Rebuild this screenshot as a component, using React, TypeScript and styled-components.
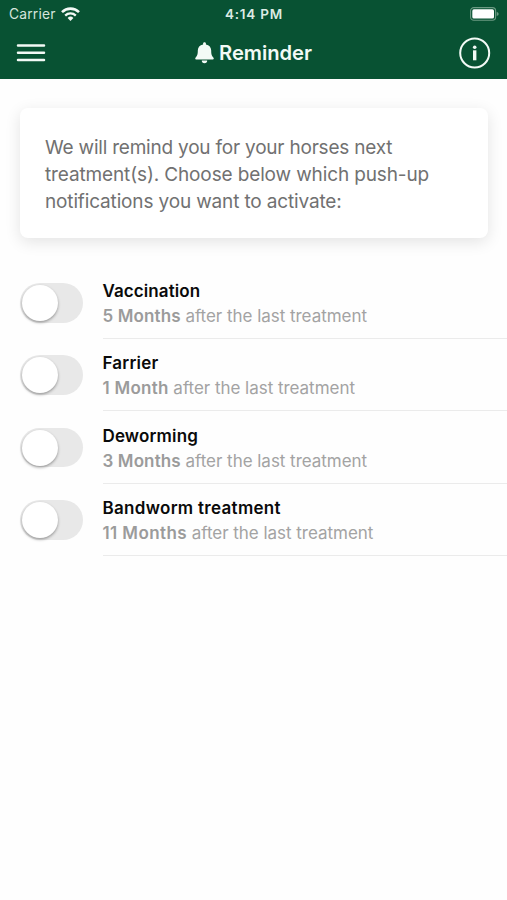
import React, { useState } from "react";
import styled, { createGlobalStyle } from "styled-components";

const GlobalStyle = createGlobalStyle`
  * { box-sizing: border-box; }
  body {
    margin: 0;
    background: #fefefe;
    font-family: Inter, "Liberation Sans", sans-serif;
  }
`;

const Screen = styled.div`
  width: 507px;
  height: 900px;
  overflow: hidden;
  background: #fefefe;
`;

const Header = styled.header`
  height: 79px;
  background: #085233;
  color: #f3faf6;
`;

const StatusBar = styled.div`
  display: grid;
  grid-template-columns: 1fr auto 1fr;
  align-items: center;
  height: 27px;
  padding: 0 8px 0 9px;
  font-size: 13.5px;
`;

const Carrier = styled.div`
  display: flex;
  align-items: center;
  gap: 5.5px;
  font-size: 13.8px;
  letter-spacing: 0.2px;
  color: #d5e5dc;
`;

const Clock = styled.div`
  font-weight: 600;
  letter-spacing: 0.8px;
  color: #dcebe3;
`;

const Battery = styled.svg`
  justify-self: end;
`;

const NavBar = styled.div`
  display: grid;
  grid-template-columns: 1fr auto 1fr;
  align-items: center;
  height: 52px;
  padding: 0 16px;
`;

const IconButton = styled.button<{ $end?: boolean }>`
  display: flex;
  justify-self: ${(p) => (p.$end ? "end" : "start")};
  padding: 0;
  border: 0;
  background: none;
  color: inherit;
`;

const Title = styled.h1`
  display: flex;
  align-items: center;
  gap: 5px;
  margin: 0;
  font-size: 20.2px;
  font-weight: 600;
  line-height: 24px;
  letter-spacing: -0.05px;
`;

const Card = styled.section`
  margin: 29px 19px 0 20px;
  height: 130px;
  padding: 26px 25px 24px;
  border-radius: 8px;
  background: #fff;
  box-shadow: 0 4px 16px rgba(0, 0, 0, 0.11);
`;

const Message = styled.p`
  margin: 0;
  font-size: 19px;
  line-height: 27px;
  color: #717171;
  white-space: nowrap;
`;

const Line = styled.span<{ $spacing: number }>`
  display: block;
  letter-spacing: ${(p) => p.$spacing}px;
`;

const List = styled.ul`
  margin: 28px 0 0;
  padding: 0 0 0 20px;
  list-style: none;
`;

const Row = styled.li`
  display: flex;
  gap: 19.5px;
  height: 72.4px;
`;

const Switch = styled.button`
  width: 63px;
  height: 39.5px;
  margin-top: 17px;
  padding: 1.5px 1.5px;
  border: 0;
  border-radius: 20px;
  background: #e8e8e8;
`;

const Knob = styled.span<{ $on: boolean }>`
  display: block;
  width: 36px;
  height: 36px;
  margin-left: ${(p) => (p.$on ? 24 : 0)}px;
  border-radius: 50%;
  background: #fff;
  box-shadow: 0 1.5px 3px rgba(0, 0, 0, 0.35);
`;

const RowBody = styled.div`
  flex: 1;
  height: 73px;
  padding-top: 13px;
  border-bottom: 1.4px solid #ebebeb;
  white-space: nowrap;
`;

const Name = styled.div<{ $spacing: number }>`
  font-size: 17px;
  font-weight: 600;
  line-height: 24px;
  letter-spacing: ${(p) => p.$spacing}px;
  color: #0a0a0a;
`;

const Detail = styled.div`
  font-size: 17px;
  line-height: 26px;
  letter-spacing: -0.03px;
  color: #a3a3a3;
`;

const Interval = styled.b<{ $spacing: number }>`
  font-weight: 600;
  letter-spacing: ${(p) => p.$spacing}px;
  color: #9b9b9b;
`;

const WifiIcon = () => (
  <svg width="19" height="14" viewBox="0 0 19 14" fill="none" stroke="#f3faf6" strokeWidth="2.6">
    <path d="M1 5.1a12.2 12.2 0 0 1 17 0" />
    <path d="M4.2 8.6a7.6 7.6 0 0 1 10.6 0" strokeWidth="2.3" />
    <path d="M9.5 14 6.6 11a4.2 4.2 0 0 1 5.8 0z" fill="#f3faf6" stroke="none" />
  </svg>
);

const BatteryIcon = () => (
  <Battery width="29" height="14" viewBox="0 0 29 14">
    <rect x="0.6" y="0.6" width="25" height="12.6" rx="3.2" fill="none" stroke="#6b9a83" strokeWidth="1.1" />
    <rect x="2.3" y="2.3" width="21.7" height="9.2" rx="1.6" fill="#fff" />
    <path d="M26.7 4.7q2 .8 2 2.2t-2 2.2z" fill="#6b9a83" />
  </Battery>
);

const MenuIcon = () => (
  <svg width="30" height="20" viewBox="0 0 30 20" stroke="currentColor" strokeWidth="2.5" strokeLinecap="round">
    <path d="M2 2.6h26M2 9.8h26M2 17.1h26" />
  </svg>
);

const BellIcon = () => (
  <svg width="19" height="22" viewBox="0 0 19 22" fill="currentColor">
    <path d="M9.5.2c-.9 0-1.4.6-1.4 1.4v.8C4.7 2.9 2.8 5.4 2.8 8.6c0 4-.6 5.3-2.1 6.9-.9 1-.4 2.1.8 2.1h16c1.2 0 1.7-1.1.8-2.1-1.5-1.6-2.1-2.9-2.1-6.9 0-3.2-1.9-5.7-5.3-6.2v-.8c0-.8-.5-1.4-1.4-1.4z" />
    <path d="M6.8 18.6h5.4a2.7 2.6 0 0 1-5.4 0z" />
  </svg>
);

const InfoIcon = () => (
  <svg width="32" height="32" viewBox="0 0 32 32" fill="none" stroke="currentColor">
    <circle cx="15.7" cy="16" r="14.5" strokeWidth="2" />
    <circle cx="15.7" cy="10.3" r="1.8" fill="currentColor" stroke="none" />
    <path d="M15.7 13.3v10" strokeWidth="3.4" />
  </svg>
);

const message = [
  { text: "We will remind you for your horses next", spacing: -0.21 },
  { text: "treatment(s). Choose below which push-up", spacing: -0.13 },
  { text: "notifications you want to activate:", spacing: -0.15 },
];

const treatments = [
  { name: "Vaccination", interval: "5 Months", nameSpacing: 0.08, intervalSpacing: 0.12 },
  { name: "Farrier", interval: "1 Month", nameSpacing: 0.2, intervalSpacing: 0.25 },
  { name: "Deworming", interval: "3 Months", nameSpacing: 0.15, intervalSpacing: 0.12 },
  { name: "Bandworm treatment", interval: "11 Months", nameSpacing: 0.3, intervalSpacing: 0.4 },
];

export default function App() {
  const [active, setActive] = useState<string[]>([]);
  const toggle = (name: string) =>
    setActive((list) => (list.includes(name) ? list.filter((n) => n !== name) : [...list, name]));

  return (
    <Screen>
      <GlobalStyle />
      <Header>
        <StatusBar>
          <Carrier>
            Carrier
            <WifiIcon />
          </Carrier>
          <Clock>4:14 PM</Clock>
          <BatteryIcon />
        </StatusBar>
        <NavBar>
          <IconButton aria-label="Menu">
            <MenuIcon />
          </IconButton>
          <Title>
            <BellIcon />
            Reminder
          </Title>
          <IconButton $end aria-label="Information">
            <InfoIcon />
          </IconButton>
        </NavBar>
      </Header>
      <Card>
        <Message>
          {message.map((line) => (
            <Line key={line.text} $spacing={line.spacing}>
              {line.text}
            </Line>
          ))}
        </Message>
      </Card>
      <List>
        {treatments.map(({ name, interval, nameSpacing, intervalSpacing }) => (
          <Row key={name}>
            <Switch
              role="switch"
              aria-label={name}
              aria-checked={active.includes(name)}
              onClick={() => toggle(name)}
            >
              <Knob $on={active.includes(name)} />
            </Switch>
            <RowBody>
              <Name $spacing={nameSpacing}>{name}</Name>
              <Detail>
                <Interval $spacing={intervalSpacing}>{interval}</Interval> after the last treatment
              </Detail>
            </RowBody>
          </Row>
        ))}
      </List>
    </Screen>
  );
}
